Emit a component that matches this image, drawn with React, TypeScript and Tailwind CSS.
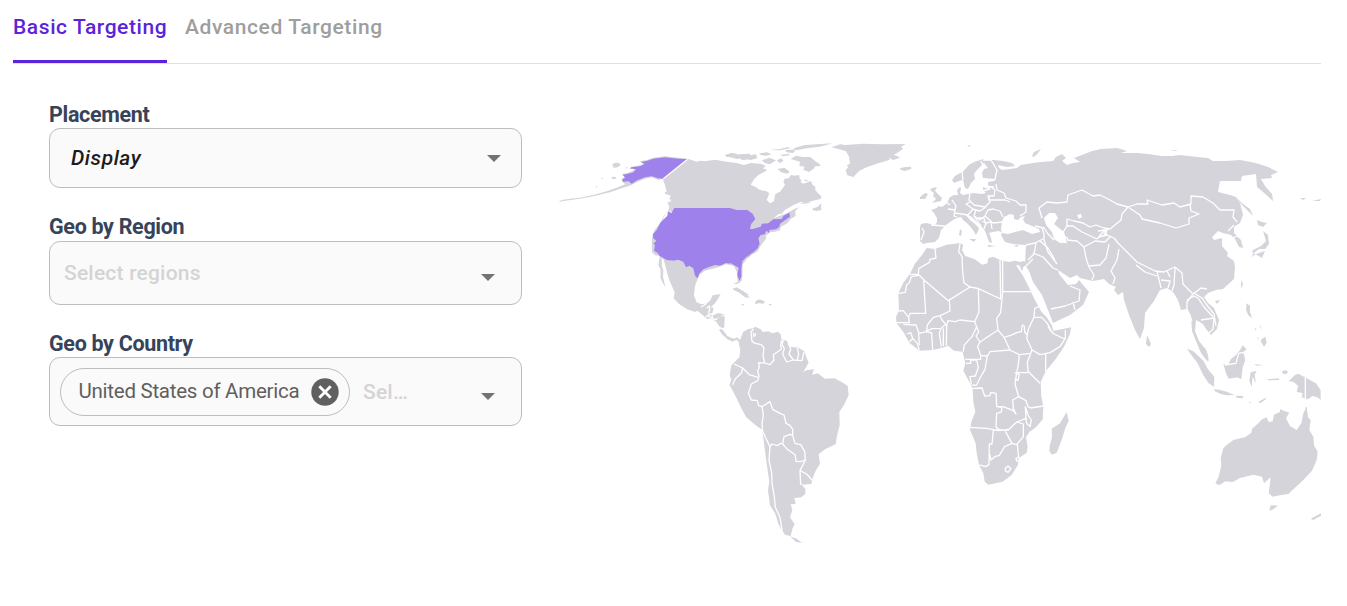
import type { ReactNode } from "react";

type MapTile = {
  id: string;
  transform: string;
  land: string[];
  selected?: string[];
  borders?: string[];
  water?: string[];
};

const TILES: MapTile[] = [
  {
    id: "north-america-west",
    transform: "translate(550 135) scale(0.33333)",
    land: [
      "M415 72L440 80 450 77 465 79 495 74 520 79 540 82 560 84 580 90 602 86V230L558 224 550 219H370L366 232 356 226 358 214 352 203 364 198 358 190 363 182 345 176 344 172 350 170 345 150 338 131 325 135 305 127 285 131 262 140 240 152 215 160 180 172 130 184 90 191 45 197 25 201 35 195 60 191 90 188 130 180 170 169 200 158 225 148 216 139 215 133 224 125 216 117 232 114 248 108 254 103 238 101 244 95 270 91 280 86 270 79 290 75 310 68 345 64 385 68Z",
      "M187 88L195 83 207 84 212 90 203 97 190 98Z",
      "M183 127L195 125 200 130 190 133ZM152 130L160 128 157 132ZM136 156L142 152 141 158ZM225 98L234 97 230 101Z",
      "M352 224L362 230 372 222 372 236 340 262 318 288 311 302 314 318 308 350 330 365 400 384 408 399 428 402 443 432 450 418 465 407 500 398 528 388 552 392 560 410 566 437 575 437 577 390 590 372 602 362 600 230Z",
      "M352 224L338 255 316 282 308 298 305 318 306 352 318 362 325 360 335 255Z",
      "M330 362L350 373 370 377 385 374 400 378 408 395 418 390 430 400 443 432 435 452 432 482 440 502 455 508 470 505 480 497 488 481 512 477 505 490 495 505 482 517 491 518 487 535 474 536 466 548 458 540 442 527 435 531 410 522 386 506 371 490 374 472 360 440 353 420 347 395 341 374 335 368 336 395 340 405 339 425 346 456 337 441 331 427 332 404 325 390Z",
      "M466 546L478 536 487 538 485 550 470 552ZM486 543L502 534 523 538 521 580 508 574 498 559 485 553Z",
      "M550 460L562 460 578 470 598 486 586 483 570 470 552 464ZM553 445L565 440 574 430 572 440 560 447Z",
      "M524 60L545 54 556 56 552 62 566 58 600 56 602 72 580 74 568 68 548 67 530 66Z",
      "M562 62L595 60 600 71 575 75Z",
      "M507 584L515 582 524 594 530 604 540 612 535 615 516 598Z",
    ],
    selected: [
      "M415 72L385 71 345 67 310 71 290 78 272 81 284 87 270 94 245 97 240 100 258 103 250 112 232 117 218 119 226 128 217 133 219 140 236 139 245 146 262 136 285 127 305 124 325 130 341 131Z",
      "M372 219H550L558 224 585 228 602 225V360L585 370 576 385 576 420 570 437 564 425 563 405 558 390 545 387 528 384 510 392 495 390 480 395 460 403 447 417 443 430 435 422 430 400 418 392 408 397 400 380 385 374 370 377 350 375 328 362 322 353 312 347 315 330 310 326 319 317 310 310 309 298 320 285 332 262 352 242 354 228 364 235Z",
    ],
    borders: [
      "M452 516L462 511 470 505M470 520L478 513 479 525 475 535M466 546L482 538 502 534M486 542L488 552 500 553 522 540M472 540L485 550",
      "M340 131L413 73",
    ],
  },
  {
    id: "north-america-east",
    transform: "translate(730 135) scale(0.33333)",
    land: [
      "M0 84L18 88 45 90 62 84 95 87 108 94 98 100 112 104 104 110 85 120 72 133 62 149 75 155 90 165 110 169 118 175 110 195 120 205 132 198 136 177 150 170 158 160 165 149 160 140 164 131 176 130 184 119 193 122 207 120 210 132 215 135 211 141 220 146 243 138 248 150 256 155 256 165 266 177 274 183 272 192 258 195 235 200 210 202 190 210 165 225 155 236 145 238 130 250 170 235 192 223 208 216 196 228 197 243 182 252 172 265 152 276 150 286 135 290 121 291 108 302 108 311 90 335 82 350 55 364 38 380 37 425 28 440 22 432 21 400 0 386Z",
      "M250 220L262 216 274 205 273 217 275 224 260 228 246 224Z",
      "M305 37L330 28 345 30 400 26 460 28 527 27 513 36 520 41 500 55 477 68 480 74 440 86 410 97 388 107 370 126 352 121 347 105 355 97 350 91 360 86 357 65 348 49 325 42Z",
      "M478 58L500 62 510 68 490 75 478 69ZM510 100L522 97 543 95 544 101 525 108 513 105Z",
      "M0 54L20 56 26 65 50 62 78 58 82 70 62 75 40 68 20 72 0 66Z",
      "M88 55L110 52 125 58 108 62 92 60ZM96 76L118 68 138 76 120 88 104 84ZM120 45L150 42 175 36 180 40 150 46ZM140 76L155 70 160 78 150 84ZM182 72L198 62 218 66 242 66 254 77 268 86 272 93 256 94 250 102 237 111 220 104 224 95 208 92 210 80ZM150 60L178 56 178 61 158 64ZM165 46L198 43 190 54 170 52ZM190 40L225 30 260 28 308 25 270 35 230 40 200 46ZM142 102L164 98 180 111 170 116 154 112ZM220 134L238 135 228 139Z",
      "M10 460L25 461 42 475 60 489 45 487 28 473 10 464ZM80 497L92 494 105 500 100 506 86 504 76 508ZM36 507L43 508 38 511ZM117 508L126 508 121 511ZM10 446L20 444 28 438 26 444 16 448Z",
      "M210 206L230 199 246 200 226 206Z",
    ],
    selected: [
      "M0 219L20 225 52 225 68 236 76 252 63 268 60 282 68 282 92 275 96 266 115 265 130 253 155 252 160 243 178 233 180 245 165 256 150 266 148 276 138 283 118 285 118 294 109 287 104 298 92 300 85 310 89 326 83 340 70 352 50 365 37 378 34 400 34 425 28 437 22 420 26 398 8 388 0 383Z",
    ],
  },
  {
    id: "south-america",
    transform: "translate(690 280) scale(0.33333)",
    land: [
      "M78 122L90 108 104 110 103 140 96 144 82 130ZM88 150L98 150 112 168 130 176 142 172 152 182 148 188 140 179 126 185 108 172Z",
      "M160 155L175 147 190 145 196 140 212 148 218 156 235 154 248 160 262 155 272 162 274 178 290 182 300 200 325 203 343 214 350 234 356 248 340 275 352 270 372 268 366 284 384 280 404 296 434 295 456 307 473 318 476 345 462 375 448 396 449 436 442 462 437 493 405 508 386 523 390 552 377 572 368 594 364 612 340 614 330 608 346 626 346 642 334 652 313 654 317 672 302 673 307 690 300 712 314 732 308 744 302 768 285 764 270 742 255 700 240 676 234 630 238 606 230 550 222 490 217 450 195 434 168 411 152 380 135 345 118 314 124 300 119 284 124 256 148 232 151 210 146 190Z",
      "M262 712L270 728 274 742 264 730ZM300 769L320 776 336 788 318 786Z",
      "M118 22L130 26 140 22 158 32 178 46 160 44 138 30ZM196 64L208 58 224 66 216 70 206 69 196 72ZM154 73L164 74 158 77ZM236 72L246 73 240 77ZM140 0L152 2 148 8Z",
    ],
    borders: [
      "M190 147L183 156 186 184 196 190 214 194 222 204 219 228 224 248M275 180L272 194 274 208 250 224 252 240 240 254 224 249 206 248 208 262 203 272 207 290 203 302 184 312 175 340 184 360 202 362 206 377 216 380 240 365 248 388 266 398 282 405 288 430 300 436 308 448 308 464",
      "M280 180L276 194 283 206 278 222 290 246 310 240 336 242 342 216M295 190L302 208 297 222 310 240M322 204L326 222 322 240",
      "M132 252L158 264 178 284 204 292M158 264L154 280 136 296 128 314M216 380L220 405 216 430 217 450 226 472 240 500 246 492 262 497 272 490 278 492 282 470 300 463 308 466 315 490 332 494 344 514 346 540 332 545 318 544 316 525 290 506 278 492",
      "M240 500L237 540 245 580 246 610 253 650 256 682 270 712 278 764M346 540L330 572 332 614M330 572L350 582 366 600M190 158L192 170 198 160",
    ],
  },
  {
    id: "eurasia",
    transform: "translate(0 0)",
    land: [
      "M920 227L921 224 926 223 935 225 937 222 937 218 934 213 931 210 937 208 938 206 942 207 946 204 948 201 950 197 954 195 958 195 957 190 960 187 961 188 960 193 963 195 968 194 973 193 982 194 986 193 983 190 983 187 988 189 991 188 988 186 988 182 994 181 996 179 983 178 982 173 984 169 988 168 984 163 980 167 976 171 974 174 975 179 971 183 968 189 965 188 963 180 959 181 954 183 952 180 955 176 962 172 966 168 970 164 974 162 977 160 983 159 987 160 993 160 1003 161 1012 163 1015 166 1007 167 998 165 999 168 1002 170 1010 169 1017 168 1021 165 1033 163 1041 162 1053 161 1056 157 1062 154 1066 158 1062 161 1067 165 1073 163 1080 162 1074 158 1087 153 1092 151 1101 149 1117 148 1127 151 1121 153 1138 153 1148 154 1162 156 1172 156 1180 155 1197 157 1208 158 1213 161 1226 161 1240 160 1256 163 1268 167 1278 172 1271 175 1272 178 1261 179 1265 186 1272 194 1273 201 1263 192 1257 187 1256 174 1242 176 1241 181 1220 181 1218 192 1230 195 1236 197 1240 203 1243 215 1240 223 1234 227 1234 233 1241 240 1243 248 1239 247 1235 239 1231 235 1223 233 1218 231 1212 237 1214 240 1222 238 1222 246 1228 253 1227 256 1234 261 1235 268 1234 279 1223 289 1216 290 1208 293 1204 297 1208 303 1214 308 1219 320 1217 329 1211 335 1206 329 1203 324 1196 320 1195 331 1199 341 1206 350 1208 362 1201 353 1196 341 1192 331 1191 316 1187 309 1181 310 1178 300 1173 292 1167 288 1160 290 1154 301 1145 313 1144 328 1140 339 1135 330 1129 315 1124 300 1123 292 1118 295 1114 290 1116 287 1109 284 1104 279 1093 281 1080 278 1077 275 1070 278 1058 270 1057 264 1059 274 1068 285 1076 284 1079 280 1089 292 1083 305 1070 315 1053 323 1048 310 1042 295 1033 282 1029 271 1025 265 1026 245 1013 244 1005 242 1001 235 1002 232 998 231 993 232 989 233 991 238 992 243 989 242 987 236 985 231 982 227 977 222 972 217 968 215 965 214 970 220 975 224 979 228 978 231 976 235 973 230 968 224 963 220 961 217 957 218 953 220 950 222 946 225 941 230 939 238 935 242 927 243 923 244 920 241Z",
      "M932 188L937 187 935 191 939 195 942 198 941 201 932 203 936 199 933 196 934 193 930 190ZM920 197L925 193 928 194 925 199 920 199ZM960 229L962 231 961 236 959 235ZM969 239L976 239 974 242ZM988 245L996 246 988 247ZM1014 246L1019 244 1017 247Z",
      "M1032 156L1034 152 1041 149 1038 153 1034 157ZM1170 151L1176 150 1177 151ZM967 146L971 145 969 147Z",
      "M1236 197L1243 204 1250 209 1253 216 1250 213 1242 205ZM1257 220L1262 222 1267 223 1263 227 1258 225ZM1263 231L1268 235 1269 244 1265 249 1259 249 1254 253 1251 257 1256 254 1265 251 1262 258 1252 252 1253 250 1261 246 1266 241Z",
      "M1300 198L1306 198 1303 200ZM1312 201L1321 199 1320 201Z",
      "M1147 335L1151 344 1149 347 1146 344ZM1215 301L1220 300 1217 304ZM1241 280L1243 284 1241 289Z",
    ],
    water: [
      "M1001 229L1002 222 1004 217 1010 214 1014 215 1014 219 1018 220 1021 217 1025 216 1023 219 1025 223 1032 226 1039 229 1040 232 1032 234 1023 230 1015 232 1008 234 1002 233Z",
      "M1044 218L1049 213 1055 213 1058 218 1054 224 1059 228 1064 232 1067 243 1060 243 1054 239 1052 232 1046 225Z",
      "M1077 215L1081 214 1082 217 1079 219Z",
    ],
    borders: [
      "M963 180L962 172 968 164 975 161 982 159M984 168L981 161M983 160L991 160 997 170 995 179M983 186L994 187M982 191L990 189M991 187L995 190 994 196 989 196M996 184L997 190 1004 193 1006 198 1016 201 1020 205 1026 205 1026 212 1020 216",
      "M988 195L989 200 1005 200 1010 202M970 193L969 200 974 205 985 207 990 202 989 196M952 200L956 206 955 210 948 209M946 202L950 205M955 210L954 216 957 217M955 213L968 215 973 209 966 204 970 202M972 209L980 211 986 207M976 210L974 216 980 220 985 216 988 210 993 209 1000 211 1003 217M985 216L993 223 1003 222M974 216L981 226M982 221L986 223 984 229M986 223L991 222 992 229M978 218L984 218 986 225M931 225L945 226M922 228L924 232 921 240",
      "M1042 218L1039 208 1047 202 1057 203 1067 202 1068 195 1082 190 1093 196 1100 195 1110 200 1117 204 1128 207M1128 207L1122 214 1121 220 1110 229 1104 228 1096 225 1090 227 1083 223 1074 221 1067 219 1067 226 1073 226 1082 232 1097 239",
      "M1128 207L1137 204 1148 204 1147 200 1162 205 1174 203 1180 207 1191 204 1191 196 1203 197 1213 203 1220 210 1234 210 1233 217 1237 222M1128 207L1140 215 1142 219 1160 223 1176 228 1189 224 1189 218 1199 214 1191 211 1190 204M1228 231L1234 225M1232 238L1238 236",
      "M1097 239L1103 232 1108 229 1104 234 1114 238 1118 243M1098 231L1105 230 1107 235 1099 237M1068 239L1062 234 1067 226M1067 240L1077 241 1084 247 1095 241 1105 242 1111 236M1084 247L1086 258 1089 267 1094 275 1092 280M1089 266L1100 265 1106 258 1109 244M1119 249L1117 260 1111 271 1115 278 1113 284M1118 243L1129 254 1137 262 1155 271 1164 272 1175 267 1182 273 1183 284 1193 294 1201 288 1207 289M1136 265L1145 272 1157 276M1157 271L1161 288M1161 280L1170 281 1168 288M1167 271L1170 277M1175 268L1174 285 1172 291M1193 294L1187 302 1187 309 1192 321M1187 300L1194 296 1198 298 1204 307 1213 317M1201 320L1214 318 1213 329 1209 333M1194 293L1202 298 1206 304 1214 314 1216 326",
      "M1042 228L1044 234 1044 240 1048 252 1057 264M1043 239L1035 243 1026 245M1036 243L1034 254 1028 260M1033 253L1043 257 1053 268 1058 270M1040 241L1048 248 1055 260M1026 266L1033 259M1070 286L1080 290 1079 301 1065 306 1051 309M1073 302L1075 310M1035 226L1044 228 1048 234 1054 240",
    ],
  },
  {
    id: "africa",
    transform: "translate(880 230) scale(0.33333)",
    land: [
      "M140 54L165 57 200 44 240 39 250 44 246 60 256 78 285 88 306 104 322 100 325 84 340 80 360 90 385 96 405 92 420 96 434 92 436 106 428 114 440 140 452 175 466 205 484 235 500 260 515 285 520 302 545 298 573 292 570 312 552 350 525 390 498 422 482 456 484 500 490 530 488 568 468 592 448 606 438 622 443 650 440 668 416 685 414 704 395 735 368 755 325 764 314 755 310 730 297 705 290 670 287 640 270 600 274 575 286 545 280 515 278 475 266 452 250 422 256 400 248 365 222 362 205 348 160 360 118 362 88 338 70 306 50 280 48 262 57 240 55 190 70 158 90 132 104 102 126 75Z",
      "M560 546L566 572 556 594 545 630 530 668 516 674 508 664 509 648 516 622 515 596 540 580Z",
    ],
    water: ["M408 106L418 106 425 122 436 114 450 150 470 185 480 215 500 240 514 284 504 266 484 245 462 205 442 162 426 132Z"],
    borders: [
      "M165 57L168 84 150 88 148 97 116 116 115 136 94 140 88 158 80 164 76 187 54 190M90 133L117 133M117 135L132 150 205 212 270 171 294 175 362 207 360 90M131 152L137 250 90 250 86 262 70 242 55 243M208 212L210 243 180 257 160 262 142 285 140 303 156 296 183 295 198 283M180 257L186 270 200 286 204 272 226 275 240 270 284 275 297 246 295 175M240 40L236 65 246 80 248 125 252 158 270 171",
      "M368 90L368 185H465M368 185L362 248 350 265 354 300 372 322 392 316 410 308 424 305 427 285 433 288 434 306 442 315M86 262L88 278 50 278M70 283L108 285 117 310 140 305 155 309 158 360M80 312L92 308 98 325 88 336M98 325L112 340 118 362M116 310L118 345M183 295L178 310 184 350M190 295L190 348M200 286L199 347M284 275L290 290 276 320 252 346 250 365M290 290L296 306 288 318 300 336 354 300M300 336L293 350 302 376 302 388H256M302 376L322 378 330 365 390 360 372 322",
      "M258 400H272V390H290L295 412 286 438 270 440 274 464M322 378L315 418 300 444 290 465 276 466M390 360L418 374 452 370 456 360 440 325 445 298 462 262 464 235 486 225M462 262L485 262 502 280 514 303M510 300L522 312 556 328M514 304L504 290M456 360L480 374 510 368 540 350 556 325V300M497 372V425M452 372L442 396 444 424 480 460M418 374L414 410 410 428H444M404 428L418 434 414 450 404 448M410 428L405 462 416 500 438 512 444 530 452 534 490 528",
      "M278 475L306 474 314 498 330 497 332 487 348 490 350 530 370 530 400 542 408 552 400 536 398 510 416 500M350 530L366 532 364 546 350 550 348 592 360 600M270 592L320 595 356 602 385 598M340 600L336 642 328 642 327 704 316 710 298 705M376 604L396 640 410 644 430 620V582L410 576 385 600 340 600M396 640L374 650 358 676 344 680 333 690 329 672M410 576L438 565 436 530 444 555 454 570 450 590 440 580 438 565M412 642L416 684M414 682L408 685 410 693 416 692M376 715L384 708 393 716 384 727 376 722Z",
    ],
  },
  {
    id: "islands",
    transform: "translate(1080 240) scale(0.33333)",
    land: [
      "M322 326L340 334 370 362 384 388 403 410 402 440 386 430 370 406 352 368 330 340ZM362 320L376 325 384 345 386 364 374 354ZM344 286L352 296 357 308 346 298Z",
      "M402 447L420 450 440 455 450 460 465 465 440 466 422 462 405 454Z",
      "M430 372L444 375 452 358 468 345 480 330 488 316 500 328 490 337 496 360 488 382 484 418 472 412 446 416 438 400Z",
      "M512 397L530 392 524 404 528 430 518 410 515 440 508 424ZM522 373L550 375 530 377ZM562 418L598 415 596 420 564 421ZM608 392L620 391 624 398 615 403 606 398Z",
      "M626 424L645 405 655 401 680 415 708 430 722 450V480L712 472 697 468 684 478 665 472 668 460 650 455 655 438 640 425Z",
      "M500 190L510 198 510 215 516 235 505 226 498 210ZM544 298L556 290 560 308 552 320 543 305ZM540 253L546 270 541 262ZM524 264L530 268 525 271ZM532 290L538 298 534 296Z",
      "M468 467L490 468 488 475 470 473ZM505 485L515 487 510 489ZM535 486L560 472 555 480 540 490ZM676 503L681 500 680 510Z",
    ],
    borders: ["M434 375L468 370 476 340 498 336M676 405V478"],
  },
  {
    id: "australia",
    transform: "translate(1180 380) scale(0.33333)",
    land: [
      "M106 310L116 290 124 255 122 235 130 205 140 195 160 180 195 172 214 158 216 146 235 130 246 118 260 112 266 126 278 124 282 104 300 96 300 88 328 98 318 115 330 138 350 150 364 130 370 100 380 80 384 112 392 120 388 150 400 170 402 196 413 215 410 240 396 272 370 300 340 328 325 342 300 346 278 350 266 340 270 310 272 292 252 310 246 290 220 284 180 294 158 306 136 304 118 316Z",
      "M272 376L294 377 280 388 268 392ZM392 416L423 400V407L400 420Z",
    ],
  },
];

function WorldMap() {
  return (
    <svg aria-label="World map" className="block h-[420px] w-[771px] shrink-0" role="img" viewBox="550 135 771 420">
      {TILES.map((tile) => (
        <g key={tile.id} transform={tile.transform}>
          {tile.land.map((d) => (
            <path d={d} fill="#d5d4da" key={d} />
          ))}
          {tile.selected?.map((d) => (
            <path d={d} fill="#9f81ec" key={d} />
          ))}
          {tile.water?.map((d) => (
            <path d={d} fill="#fff" key={d} />
          ))}
          {tile.borders?.map((d) => (
            <path
              d={d}
              fill="none"
              key={d}
              stroke="#fff"
              strokeLinejoin="round"
              strokeWidth={1.3}
              vectorEffect="non-scaling-stroke"
            />
          ))}
        </g>
      ))}
    </svg>
  );
}

function Caret({ className = "" }: { className?: string }) {
  return (
    <svg className={`h-[7px] w-[14px] shrink-0 ${className}`} viewBox="0 0 14 7">
      <path d="M0 0h14L7 7z" fill="#737373" />
    </svg>
  );
}

type FieldProps = {
  children: ReactNode;
  className: string;
  label: string;
};

function Field({ children, className, label }: FieldProps) {
  return (
    <div>
      <div className="h-7 text-[21.5px] leading-[30px] font-bold tracking-[-0.32px] text-[#37435a]">{label}</div>
      <div className={`flex w-[473px] items-center rounded-[11px] border border-[#bdbdbd] bg-[#fafafa] ${className}`}>
        {children}
      </div>
    </div>
  );
}

export default function App() {
  return (
    <main className="h-[606px] w-[1347px] overflow-hidden bg-white pl-[13px] font-['Roboto','Liberation_Sans',sans-serif]">
      <nav className="flex h-16 w-[1308px] gap-[18px] border-b border-[#e0e0e0] text-[21px] leading-[26px] font-medium">
        <button className="flex h-[63px] w-[154px] items-start border-b-3 border-[#5b23dd] pt-[14px] tracking-[0.58px] whitespace-nowrap text-[#5b23dd]" type="button">
          Basic Targeting
        </button>
        <button className="flex h-[63px] items-start pt-[14px] tracking-[0.6px] whitespace-nowrap text-[#9e9e9e]" type="button">
          Advanced Targeting
        </button>
      </nav>

      <div className="flex gap-7">
        <div className="flex w-[509px] shrink-0 flex-col pt-9 pl-9">
          <Field className="h-[60px] pr-5 pl-[21px]" label="Placement">
            <span className="flex-1 pt-0.5 text-[21px] font-medium tracking-[0.55px] text-[#1c1c1c] italic">Display</span>
            <Caret />
          </Field>
          <div className="h-6" />
          <Field className="mt-px h-16 pr-[26px] pl-[14px]" label="Geo by Region">
            <span className="flex-1 pt-0.5 text-[21px] font-medium tracking-[0.2px] text-[#d4d4d4]">Select regions</span>
            <Caret className="mt-[9px]" />
          </Field>
          <div className="h-6" />
          <Field className="h-[69px] pr-[26px] pl-[10px]" label="Geo by Country">
            <span className="flex h-12 w-[290px] items-center rounded-full border border-[#bdbdbd] pl-[17.5px]">
              <span className="w-[232px] text-[20.5px] tracking-[-0.26px] whitespace-nowrap text-[#5f5f5f]">United States of America</span>
              <svg className="h-7 w-7 shrink-0" viewBox="0 0 28 28">
                <circle cx="14" cy="14" fill="#606060" r="13.7" />
                <path d="M8.3 8.3l11.4 11.4M19.7 8.3L8.3 19.7" stroke="#fff" strokeWidth="2.8" />
              </svg>
            </span>
            <span className="ml-[13px] flex-1 pt-0.5 text-[21px] font-medium tracking-[0.2px] text-[#d4d4d4]">Sel…</span>
            <Caret className="mt-[9px]" />
          </Field>
        </div>
        <div className="pt-[71px]">
          <WorldMap />
        </div>
      </div>
    </main>
  );
}
